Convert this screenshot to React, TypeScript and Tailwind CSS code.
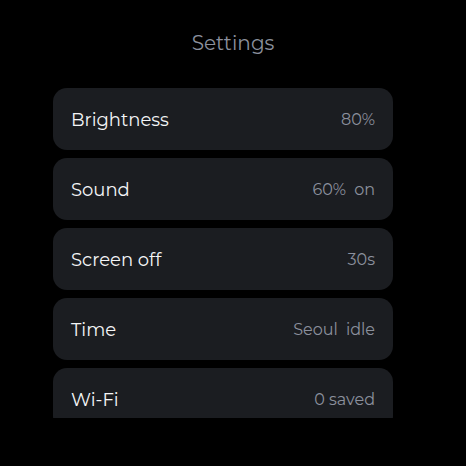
import React from "react";

const rows: { label: string; values: string[] }[] = [
  { label: "Brightness", values: ["80%"] },
  { label: "Sound", values: ["60%", "on"] },
  { label: "Screen off", values: ["30s"] },
  { label: "Time", values: ["Seoul", "idle"] },
  { label: "Wi-Fi", values: ["0 saved"] },
];

export default function App() {
  return (
    <div
      className="w-[466px] h-[466px] bg-black flex flex-col overflow-hidden"
      style={{ fontFamily: "Montserrat, 'Noto Sans', sans-serif" }}
    >
      <div className="mt-[30px] h-[26px] text-center text-[20px] leading-[26px] text-[#8b909d]">Settings</div>
      <div className="mt-[32px] ml-[53px] w-[340px] h-[330px] overflow-hidden flex flex-col gap-[8px]">
        {rows.map((r) => (
          <div
            key={r.label}
            className="shrink-0 h-[62px] rounded-[14px] bg-[#1b1d21] flex items-center justify-between px-[18px] pt-[2px]"
          >
            <span className="text-[18px] text-[#f4f5f7]">{r.label}</span>
            <span className="flex gap-[8px] text-[16px] text-[#8b909d]">
              {r.values.map((v) => (
                <span key={v}>{v}</span>
              ))}
            </span>
          </div>
        ))}
      </div>
    </div>
  );
}
